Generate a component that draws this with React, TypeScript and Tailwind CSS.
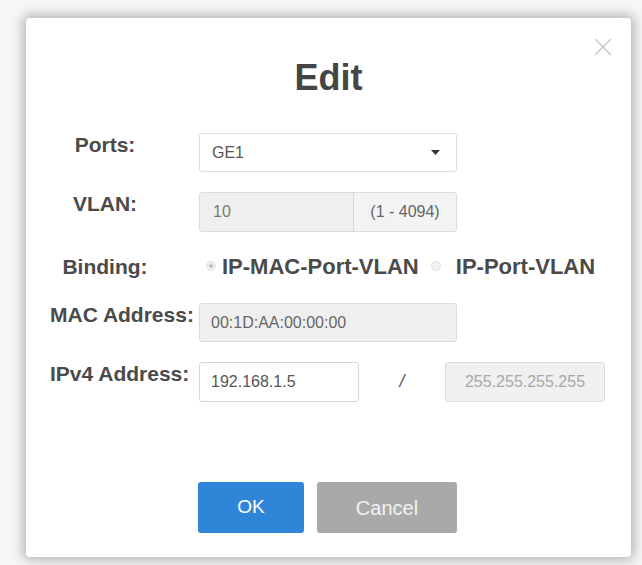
import type { ReactNode } from "react";

const font = { fontFamily: '"Liberation Sans", Arial, sans-serif' };

function Label({ children, center = true }: { children: ReactNode; center?: boolean }) {
  return (
    <div className="w-[173px] shrink-0 pl-[24px] pt-[1px]">
      <div
        className={`${center ? "w-[110px] text-center" : ""} whitespace-nowrap text-[21px] leading-[21px] font-bold text-[#4a4a4a]`}
      >
        {children}
      </div>
    </div>
  );
}

function Radio({ checked }: { checked?: boolean }) {
  return (
    <span className="flex h-[10px] w-[10px] items-center justify-center rounded-full border border-[#e2e2e2] bg-[#f1f1f1]">
      {checked && <span className="h-[4px] w-[4px] rounded-full bg-[#bdbdbd]" />}
    </span>
  );
}

export default function App() {
  return (
    <div className="h-[565px] w-[642px] overflow-hidden bg-[#f6f6f6] pt-[18px] pl-[26px]" style={font}>
      <div className="relative h-[539px] w-[605px] rounded-[4px] bg-white shadow-[0_0_12px_3px_rgba(0,0,0,0.28)]">
        <button className="absolute right-[19px] top-[20px] text-[#c4c4c4]">
          <svg width="18" height="18" viewBox="0 0 18 18" fill="none" stroke="currentColor" strokeWidth="1.3">
            <path d="M1 1L17 17M17 1L1 17" />
          </svg>
        </button>

        <div className="pt-[42px] text-center text-[36px] leading-[36px] font-bold text-[#454545]">Edit</div>

        {/* Ports */}
        <div className="mt-[37px] flex items-start">
          <Label>Ports:</Label>
          <div className="flex h-[39px] w-[258px] items-center justify-between rounded-[3px] border border-[#dcdcdc] bg-white pl-[12px] pr-[16px] text-[16px] text-[#555]">
            <span>GE1</span>
            <svg width="9" height="5" viewBox="0 0 9 5">
              <path d="M0 0H9L4.5 5Z" fill="#333" />
            </svg>
          </div>
        </div>

        {/* VLAN */}
        <div className="mt-[20px] flex items-start">
          <Label>VLAN:</Label>
          <div className="flex h-[40px] w-[258px] overflow-hidden rounded-[3px] border border-[#dcdcdc] text-[16px]">
            <div className="flex w-[153px] items-center bg-[#efefef] pl-[13px] text-[#777]">10</div>
            <div className="flex flex-1 items-center justify-center border-l border-[#d8d8d8] bg-[#f3f3f3] text-[#666]">
              (1 - 4094)
            </div>
          </div>
        </div>

        {/* Binding */}
        <div className="mt-[23px] flex items-center">
          <Label>Binding:</Label>
          <div className="flex items-center pl-[7px] text-[22px] leading-[21px] font-bold text-[#4a4a4a]">
            <Radio checked />
            <span className="ml-[6px]">IP-MAC-Port-VLAN</span>
            <span className="ml-[12px]">
              <Radio />
            </span>
            <span className="ml-[15px]">IP-Port-VLAN</span>
          </div>
        </div>

        {/* MAC */}
        <div className="mt-[26px] flex items-start">
          <Label center={false}>MAC Address:</Label>
          <div className="flex h-[39px] w-[258px] items-center rounded-[3px] border border-[#dcdcdc] bg-[#efefef] pl-[11px] text-[16px] text-[#666]">
            00:1D:AA:00:00:00
          </div>
        </div>

        {/* IPv4 */}
        <div className="mt-[20px] flex items-start">
          <Label center={false}>IPv4 Address:</Label>
          <div className="flex h-[40px] w-[160px] items-center rounded-[3px] border border-[#d6d6d6] bg-white pl-[11px] text-[16px] text-[#555]">
            192.168.1.5
          </div>
          <div className="w-[86px] pt-[6px] text-center text-[18px] text-[#555] italic">/</div>
          <div className="flex h-[40px] w-[160px] items-center justify-center rounded-[3px] border border-[#dcdcdc] bg-[#f0f0f0] text-[16px] text-[#a8a8a8]">
            255.255.255.255
          </div>
        </div>

        {/* Buttons */}
        <div className="mt-[80px] flex gap-[13px] pl-[172px]">
          <button className="h-[51px] w-[106px] rounded-[3px] bg-[#2f86d8] text-[19px] text-white">OK</button>
          <button className="h-[51px] w-[140px] rounded-[3px] bg-[#a9a9a9] text-[20px] text-[#f2f2f2]">Cancel</button>
        </div>
      </div>
    </div>
  );
}
